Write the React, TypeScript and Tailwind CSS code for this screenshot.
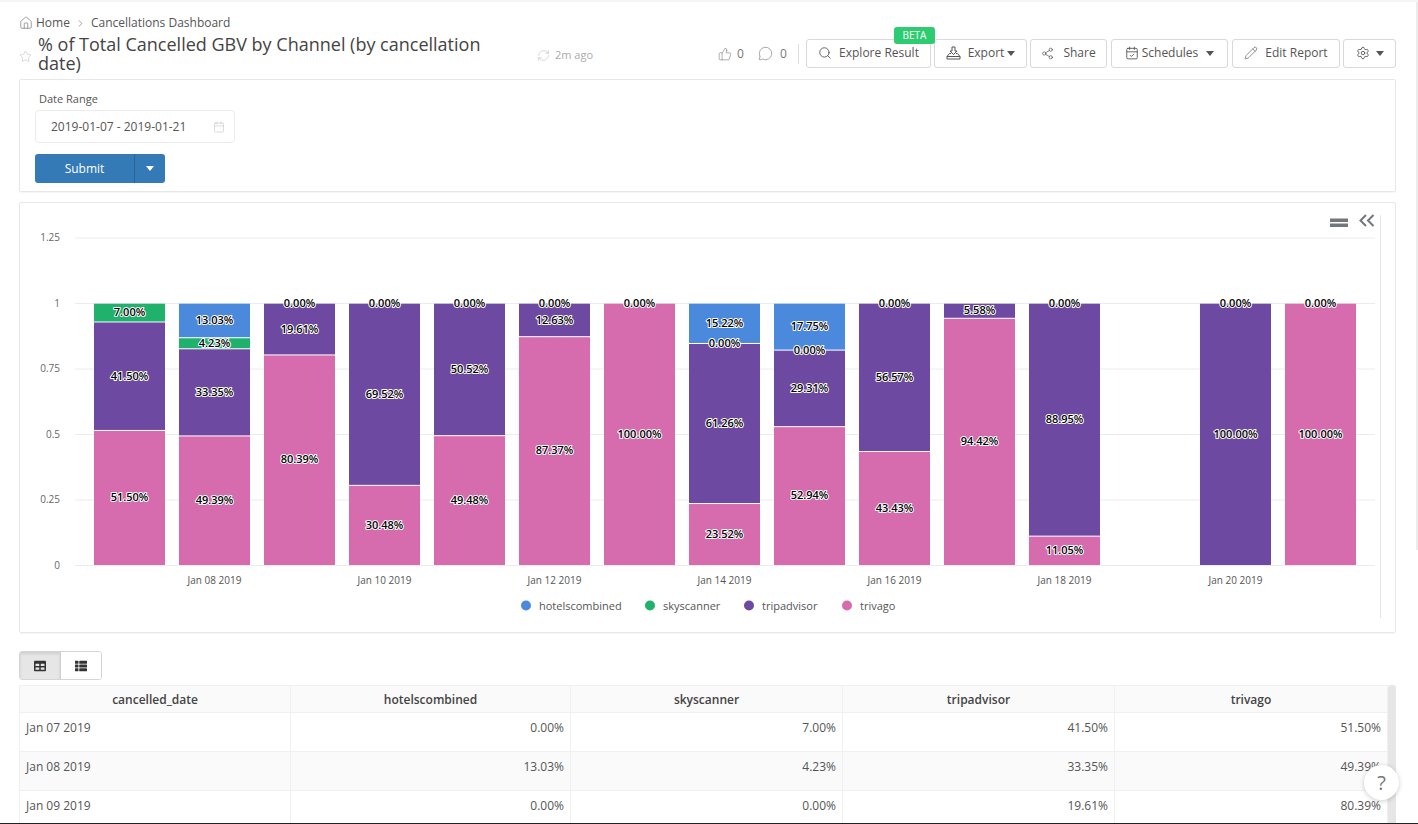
import { Calendar, ChevronRight, House, MessageCircle, Pencil, RefreshCw, Search, Settings, Share2, Star, ThumbsUp, CalendarCheck } from 'lucide-react';
import type { ReactNode } from 'react';
import { FaTable, FaThList } from 'react-icons/fa';

const BLUE = '#4a89dc';
const GREEN = '#20b26c';
const PURPLE = '#6e49a1';
const PINK = '#d66bad';

// values run bottom to top: trivago, tripadvisor, skyscanner, hotelscombined
// zero: where the lone 0.00% label sits, when there is one
type Day = { date: string; hotels: number; sky: number; trip: number; tri: number; zero?: boolean };

const days: Day[] = [
  { date: 'Jan 07 2019', hotels: 0, sky: 7, trip: 41.5, tri: 51.5 },
  { date: 'Jan 08 2019', hotels: 13.03, sky: 4.23, trip: 33.35, tri: 49.39 },
  { date: 'Jan 09 2019', hotels: 0, sky: 0, trip: 19.61, tri: 80.39, zero: true },
  { date: 'Jan 10 2019', hotels: 0, sky: 0, trip: 69.52, tri: 30.48, zero: true },
  { date: 'Jan 11 2019', hotels: 0, sky: 0, trip: 50.52, tri: 49.48, zero: true },
  { date: 'Jan 12 2019', hotels: 0, sky: 0, trip: 12.63, tri: 87.37, zero: true },
  { date: 'Jan 13 2019', hotels: 0, sky: 0, trip: 0, tri: 100, zero: true },
  { date: 'Jan 14 2019', hotels: 15.22, sky: 0, trip: 61.26, tri: 23.52, zero: true },
  { date: 'Jan 15 2019', hotels: 17.75, sky: 0, trip: 29.31, tri: 52.94, zero: true },
  { date: 'Jan 16 2019', hotels: 0, sky: 0, trip: 56.57, tri: 43.43, zero: true },
  { date: 'Jan 17 2019', hotels: 0, sky: 0, trip: 5.58, tri: 94.42 },
  { date: 'Jan 18 2019', hotels: 0, sky: 0, trip: 88.95, tri: 11.05, zero: true },
  { date: 'Jan 19 2019', hotels: 0, sky: 0, trip: 0, tri: 0 },
  { date: 'Jan 20 2019', hotels: 0, sky: 0, trip: 100, tri: 0, zero: true },
  { date: 'Jan 21 2019', hotels: 0, sky: 0, trip: 0, tri: 100, zero: true },
];

const barX = [94, 179, 264, 349, 434, 519, 604, 689, 774, 859, 944, 1029, 1114, 1200, 1285];
const yOf = (v: number) => 565 - v * 262;
const barY = (v: number) => 565 - v * 261.3;
const pct = (v: number) => `${v.toFixed(2)}%`;

const Caret = () => (
  <svg width="8" height="5" viewBox="0 0 8 5" className="shrink-0">
    <path d="M0 0h8L4 5z" fill="currentColor" />
  </svg>
);

const ToolButton = ({ width, children }: { width: string; children: ReactNode }) => (
  <div className={`${width} h-[29px] pb-[1px] flex items-center justify-center gap-[6px] bg-white border border-[#d9d9d9] rounded-[3px] text-[12px] text-[#555] shrink-0`}>
    {children}
  </div>
);

const Label = ({ x, y, v }: { x: number; y: number; v: number }) => (
  <text
    x={x}
    y={y + 3.5}
    textAnchor="middle"
    className="fill-black stroke-white stroke-[2px] [paint-order:stroke] text-[11px] font-semibold"
    strokeLinejoin="round"
  >
    {pct(v)}
  </text>
);

const Chart = () => (
  <svg width="1375" height="429" viewBox="20 203 1375 429" className="block">
    {[0, 0.25, 0.5, 0.75, 1, 1.25].map((t) => (
      <g key={t}>
        <line x1="75" x2="1375" y1={yOf(t) + 0.5} y2={yOf(t) + 0.5} stroke="#ececec" />
        <text x="60" y={yOf(t) + 3.5} textAnchor="end" className="fill-[#666] text-[10px]">
          {t}
        </text>
      </g>
    ))}
    {days.map((d, i) => {
      const x = barX[i];
      const segs: [number, string][] = [
        [d.tri, PINK],
        [d.trip, PURPLE],
        [d.sky, GREEN],
        [d.hotels, BLUE],
      ];
      let acc = 0;
      const rects: ReactNode[] = [];
      const labels: ReactNode[] = [];
      segs.forEach(([v, color], j) => {
        if (v === 0) return;
        const top = barY((acc + v) / 100);
        const bottom = barY(acc / 100);
        rects.push(
          <g key={j}>
            <rect x={x} y={top} width="71" height={bottom - top} fill={color} />
            {acc > 0 && <rect x={x} y={bottom - 0.5} width="71" height="1" fill="#fff" />}
          </g>,
        );
        labels.push(<Label key={j} x={x + 35.5} y={(top + bottom) / 2} v={v} />);
        acc += v;
      });
      // the empty series collapses onto the top of the tripadvisor segment, or the stack top
      const zeroY = d.hotels > 0 ? barY((d.tri + d.trip) / 100) : 303;
      return (
        <g key={d.date}>
          {rects}
          {labels}
          {d.zero && <Label x={x + 35.5} y={zeroY} v={0} />}
        </g>
      );
    })}
    {[1, 3, 5, 7, 9, 11, 13].map((i) => (
      <text key={i} x={barX[i] + 35.5} y="584" textAnchor="middle" className="fill-[#555] text-[10px]">
        {days[i].date}
      </text>
    ))}
    {[
      { x: 526, color: BLUE, name: 'hotelscombined' },
      { x: 650, color: GREEN, name: 'skyscanner' },
      { x: 749, color: PURPLE, name: 'tripadvisor' },
      { x: 847, color: PINK, name: 'trivago' },
    ].map((l) => (
      <g key={l.name}>
        <circle cx={l.x} cy="605.5" r="5" fill={l.color} />
        <text x={l.x + 13} y="610" className="fill-[#555] text-[11px]">
          {l.name}
        </text>
      </g>
    ))}
    <line x1="1380.5" x2="1380.5" y1="215" y2="618" stroke="#e6e6e6" />
    <path d="M1330 218.5h18v3.5h-18zM1330 223.5h18v3.5h-18z" fill="#72777a" />
    <path d="M1366 215l-5.5 5.5 5.5 5.5M1373.5 215l-5.5 5.5 5.5 5.5" fill="none" stroke="#72777a" strokeWidth="2" />
  </svg>
);

const columns = ['w-[271px]', 'w-[280px]', 'w-[272px]', 'w-[272px]', 'w-[273px]'];

export default function App() {
  return (
    <div className="relative h-[824px] overflow-hidden bg-white font-['Open_Sans',sans-serif] text-[#555] border-t-2 border-t-[#f5f5f5] border-b border-b-[#222]">
      <div className="absolute right-0 top-0 w-[2px] h-[548px] bg-[#ececec]" />

      <div className="pl-[19px] pr-[22px]">
        {/* breadcrumb */}
        <div className="flex items-center h-[14px] mt-[14px] text-[12px] text-[#555]">
          <House size={14} strokeWidth={1.2} className="text-[#777] mr-[3px]" />
          <span>Home</span>
          <ChevronRight size={11} className="text-[#999] mx-[5px]" />
          <span>Cancellations Dashboard</span>
        </div>

        {/* title and toolbar */}
        <div className="flex items-center h-[38px] mt-[5px] mb-[6px]">
          <Star size={13} strokeWidth={1} className="text-[#bbb] mr-[6px] mt-[4px] shrink-0" />
          <h1 className="w-[498px] pr-[18px] text-[18px] leading-[19px] text-[#444] shrink-0">
            % of Total Cancelled GBV by Channel (by cancellation date)
          </h1>
          <RefreshCw size={13} strokeWidth={1} className="text-[#bbb] ml-[1px] mr-[5px] mt-[2px] shrink-0" />
          <span className="text-[11px] text-[#aaa] mt-[2px] whitespace-nowrap">2m ago</span>

          <ThumbsUp size={14} strokeWidth={1} className="text-[#777] ml-[125px] mb-[1px] shrink-0" />
          <span className="text-[12px] text-[#777] ml-[5px] mb-[1px]">0</span>
          <MessageCircle size={15} strokeWidth={1} className="text-[#777] ml-[14px] mb-[1px] shrink-0" />
          <span className="text-[12px] text-[#777] ml-[7px] mb-[1px]">0</span>
          <div className="w-px h-[20px] bg-[#ddd] ml-[11px] mr-[8px] mb-[1px]" />

          <div className="relative mb-[1px]">
            <ToolButton width="w-[125px]">
              <Search size={14} strokeWidth={1.5} className="mr-[1px]" />
              Explore Result
            </ToolButton>
            <span className="absolute left-[88px] top-[-12px] w-[41px] h-[17px] flex items-center justify-center rounded-[3px] bg-[#2ecc71] text-white text-[10px]">
              BETA
            </span>
          </div>
          <div className="ml-[3px] mb-[1px]">
            <ToolButton width="w-[93px]">
              <svg width="15" height="14" viewBox="0 0 15 14" fill="none" stroke="currentColor" strokeWidth="1" className="mr-[1px]">
                <path d="M1 13h13v-2.5l-2.5-3H10M5 7.5H3.5L1 10.5V13M1 10.5h13" />
                <path d="M6 1h3v4h2L7.5 8.5 4 5h2z" />
              </svg>
              <span>Export</span>
              <span className="-ml-[3px]"><Caret /></span>
            </ToolButton>
          </div>
          <div className="ml-[3px] mb-[1px]">
            <ToolButton width="w-[77px]">
              <Share2 size={13} strokeWidth={1.3} className="mr-[3px]" />
              Share
            </ToolButton>
          </div>
          <div className="ml-[4px] mb-[1px]">
            <ToolButton width="w-[117px]">
              <CalendarCheck size={14} strokeWidth={1.5} />
              <span className="-ml-[3px] mr-[2px]">Schedules</span>
              <Caret />
            </ToolButton>
          </div>
          <div className="ml-[4px] mb-[1px]">
            <ToolButton width="w-[108px]">
              <Pencil size={14} strokeWidth={1.1} className="mr-[1px]" />
              Edit Report
            </ToolButton>
          </div>
          <div className="ml-[3px] mb-[1px]">
            <ToolButton width="w-[53px]">
              <Settings size={14} strokeWidth={1.5} />
              <Caret />
            </ToolButton>
          </div>
        </div>

        {/* filters */}
        <div className="h-[113px] border border-[#e8e8e8] rounded-[2px] shadow-[0_1px_1px_rgba(0,0,0,0.04)] pl-[15px] pt-[12px]">
          <div className="pl-[4px] text-[11px] leading-[14px] text-[#555]">Date Range</div>
          <div className="w-[200px] h-[33px] mt-[4px] flex items-center justify-between pl-[15px] pr-[9px] border border-[#ececec] rounded-[4px] text-[12px] text-[#555]">
            <span>2019-01-07 - 2019-01-21</span>
            <Calendar size={12} strokeWidth={1} className="text-[#bbb]" />
          </div>
          <div className="flex w-[130px] h-[29px] mt-[11px] rounded-[3px] overflow-hidden bg-[#337ab7] text-white text-[12px]">
            <div className="w-[100px] flex items-center justify-center border-r border-[#2a6496]">Submit</div>
            <div className="flex-1 flex items-center justify-center">
              <Caret />
            </div>
          </div>
        </div>

        {/* chart */}
        <div className="h-[431px] mt-[10px] border border-[#e8e8e8] rounded-[2px] shadow-[0_1px_1px_rgba(0,0,0,0.04)] overflow-hidden">
          <Chart />
        </div>

        {/* view toggle */}
        <div className="flex w-[83px] h-[29px] mt-[18px] border border-[#d5d5d5] rounded-[3px] overflow-hidden text-[#333]">
          <div className="w-[41px] flex items-center justify-center bg-[#e6e6e6] border-r border-[#cfcfcf] shadow-[inset_0_2px_3px_rgba(0,0,0,0.1)]">
            <FaTable size={12} />
          </div>
          <div className="flex-1 flex items-center justify-center bg-white">
            <FaThList size={12} />
          </div>
        </div>

        {/* results table */}
        <div className="flex mt-[5px]">
          <table className="w-[1368px] table-fixed border-collapse text-[12px]">
            <colgroup>
              {columns.map((c, i) => (
                <col key={i} className={c} />
              ))}
            </colgroup>
            <thead>
              <tr className="h-[27px] bg-[#fafafa] text-[#444]">
                {['cancelled_date', 'hotelscombined', 'skyscanner', 'tripadvisor', 'trivago'].map((h) => (
                  <th key={h} className="font-semibold text-center pt-[1px] border border-[#f0f0f0]">
                    {h}
                  </th>
                ))}
              </tr>
            </thead>
            <tbody>
              {days.slice(0, 3).map((d, i) => (
                <tr key={d.date} className={`h-[39px] ${i % 2 === 1 ? 'bg-[#fafafa]' : 'bg-white'}`}>
                  <td className="align-top pt-[6px] pl-[6px] border border-[#f0f0f0]">{d.date}</td>
                  {[d.hotels, d.sky, d.trip, d.tri].map((v, j) => (
                    <td key={j} className="align-top pt-[6px] pr-[6px] text-right border border-[#f0f0f0]">
                      {pct(v)}
                    </td>
                  ))}
                </tr>
              ))}
            </tbody>
          </table>
          <div className="w-[8px] bg-[#e6e6e6] rounded-t-[3px] shrink-0" />
        </div>
      </div>

      {/* help bubble */}
      <div className="absolute left-[1364px] top-[763px] w-[35px] h-[35px] flex items-center justify-center rounded-full bg-white shadow-[0_1px_5px_rgba(0,0,0,0.2)] text-[20px] text-[#777]">
        ?
      </div>
    </div>
  );
}
